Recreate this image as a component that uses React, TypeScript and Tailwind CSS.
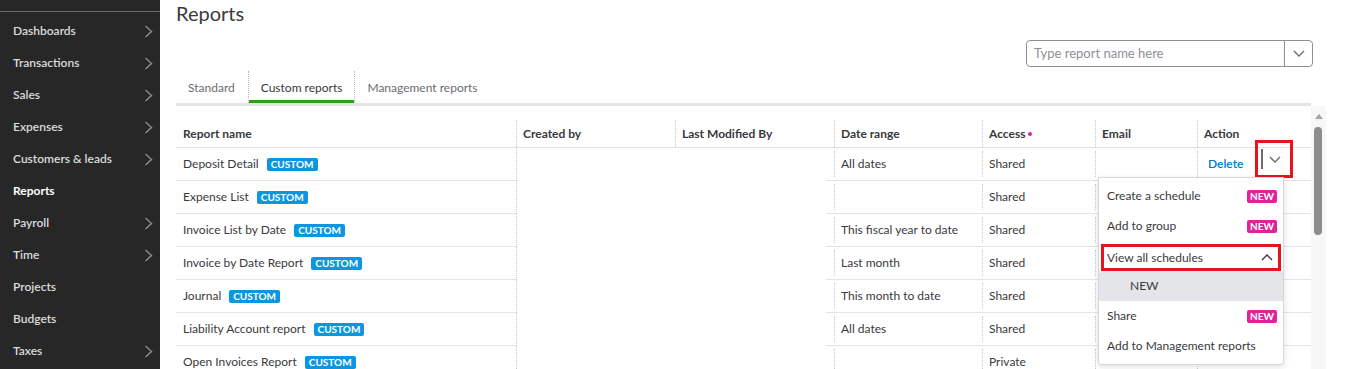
import React from 'react';

const font = { fontFamily: 'Lato, "Noto Sans", Arial, sans-serif' };

const navItems: { label: string; arrow: boolean; active?: boolean }[] = [
  { label: 'Dashboards', arrow: true },
  { label: 'Transactions', arrow: true },
  { label: 'Sales', arrow: true },
  { label: 'Expenses', arrow: true },
  { label: 'Customers & leads', arrow: true },
  { label: 'Reports', arrow: false, active: true },
  { label: 'Payroll', arrow: true },
  { label: 'Time', arrow: true },
  { label: 'Projects', arrow: false },
  { label: 'Budgets', arrow: false },
  { label: 'Taxes', arrow: true },
];

const rows = [
  { name: 'Deposit Detail', date: 'All dates', access: 'Shared' },
  { name: 'Expense List', date: '', access: 'Shared' },
  { name: 'Invoice List by Date', date: 'This fiscal year to date', access: 'Shared' },
  { name: 'Invoice by Date Report', date: 'Last month', access: 'Shared' },
  { name: 'Journal', date: 'This month to date', access: 'Shared' },
  { name: 'Liability Account report', date: 'All dates', access: 'Shared' },
  { name: 'Open Invoices Report', date: '', access: 'Private' },
];

function Chevron({ dir, className }: { dir: 'right' | 'down' | 'up'; className?: string }) {
  if (dir === 'right') {
    return (
      <svg width="9" height="13" viewBox="0 0 9 13" className={className}>
        <polyline points="1.5,1 7.5,6.5 1.5,12" fill="none" stroke="currentColor" strokeWidth="1.4" />
      </svg>
    );
  }
  const pts = dir === 'down' ? '1,1 6,6 11,1' : '1,6 6,1 11,6';
  return (
    <svg width="12" height="7" viewBox="0 0 12 7" className={className}>
      <polyline points={pts} fill="none" stroke="currentColor" strokeWidth="1.4" />
    </svg>
  );
}

function NewBadge() {
  return (
    <span className="inline-flex h-[13px] items-center rounded-[2px] bg-[#e0239b] px-[3px] text-[10px] font-bold leading-none text-white">
      NEW
    </span>
  );
}

function Sidebar() {
  return (
    <div className="w-[160px] shrink-0 bg-[#272727] pt-[11px]">
      <div className="h-px bg-[#6a6a6a]" />
      <div className="pt-[3px]">
        {navItems.map((item) => (
          <div key={item.label} className="flex h-[32px] items-center justify-between pl-[13px] pr-[7px]">
            <span
              className={
                item.active
                  ? 'text-[12px] font-bold text-white'
                  : 'text-[12px] font-semibold text-[#dcdcdc]'
              }
            >
              {item.label}
            </span>
            {item.arrow && <Chevron dir="right" className="text-[#8f8f8f]" />}
          </div>
        ))}
      </div>
    </div>
  );
}

function ActionMenu() {
  return (
    <div className="absolute left-[-99px] top-[29px] z-10 w-[186px] rounded-b-[3px] border border-[#d4d7dc] bg-white pb-[3px] pt-[3px] text-[12px] text-[#393a3d] shadow-[0_2px_6px_rgba(0,0,0,0.12)]">
      <div className="flex h-[30px] items-center justify-between pl-[8px] pr-[6px]">
        <span>Create a schedule</span>
        <NewBadge />
      </div>
      <div className="flex h-[30px] items-center justify-between pl-[8px] pr-[6px]">
        <span>Add to group</span>
        <NewBadge />
      </div>
      <div className="mx-[2px] mt-[3px] flex h-[27px] items-center justify-between border-[3px] border-[#e8141c] pl-[3px] pr-[5px]">
        <span>View all schedules</span>
        <Chevron dir="up" className="text-[#393a3d]" />
      </div>
      <div className="flex h-[30px] items-center bg-[#e4e5e8] pl-[31px]">NEW</div>
      <div className="flex h-[30px] items-center justify-between pl-[8px] pr-[6px]">
        <span>Share</span>
        <NewBadge />
      </div>
      <div className="flex h-[30px] items-center pl-[8px]">Add to Management reports</div>
    </div>
  );
}

function TableBody() {
  return (
    <div>
      {rows.map((r, i) => (
        <div key={r.name} className="flex h-[33px] text-[12px] text-[#393a3d]">
          <div className="flex w-[340px] items-center gap-[8px] border-b border-[#e3e5e8] pl-[7px]">
            <span>{r.name}</span>
            <span className="inline-flex h-[13px] items-center rounded-[2px] bg-[#0d96e0] px-[4px] text-[10px] font-bold leading-none text-white">
              CUSTOM
            </span>
          </div>
          <div className="w-[159px] border-l border-dotted border-[#c9cbcf]" />
          <div className="w-[151px]" />
          <div className="w-[156px] border-b border-[#e3e5e8] py-[3px] pl-[8px]">
            <div className="flex h-full items-center border-l border-dotted border-[#c9cbcf] pl-[6px]">{r.date}</div>
          </div>
          <div className="w-[113px] border-b border-[#e3e5e8] py-[3px]">
            <div className="flex h-full items-center border-l border-dotted border-[#c9cbcf] pl-[6px]">{r.access}</div>
          </div>
          <div className="w-[102px] border-b border-[#e3e5e8] py-[3px]">
            <div className="h-full border-l border-dotted border-[#c9cbcf]" />
          </div>
          <div className="relative flex-1 border-b border-[#e3e5e8] py-[3px]">
            <div className="flex h-full items-center border-l border-dotted border-[#c9cbcf] pl-[10px]">
              {i === 0 && <span className="font-semibold text-[#0077c5]">Delete</span>}
            </div>
            {i === 0 && (
              <>
                <div className="absolute left-[58px] top-[-8px] z-10 flex h-[38px] w-[38px] items-center border-[3px] border-[#e8141c] pl-[3px]">
                  <div className="h-[20px] w-[2px] bg-[#6b6c72]" />
                  <Chevron dir="down" className="ml-[6px] text-[#6b6c72]" />
                </div>
                <ActionMenu />
              </>
            )}
          </div>
        </div>
      ))}
    </div>
  );
}

function TableHeader() {
  const cell = 'flex h-[27px] items-center border-l border-dotted border-[#c9cbcf] pl-[6px]';
  return (
    <div className="flex border-b border-[#dfe1e4] pt-[14px] text-[12px] font-bold text-[#393a3d]">
      <div className="flex h-[27px] w-[340px] items-center pl-[7px]">Report name</div>
      <div className={`${cell} w-[159px]`}>Created by</div>
      <div className={`${cell} w-[159px]`}>Last Modified By</div>
      <div className={`${cell} w-[148px]`}>Date range</div>
      <div className={`${cell} w-[113px] gap-[3px]`}>
        Access
        <span className="h-[4px] w-[4px] rounded-full bg-[#e0239b]" />
      </div>
      <div className={`${cell} w-[102px]`}>Email</div>
      <div className={`${cell} flex-1`}>Action</div>
    </div>
  );
}

export default function App() {
  return (
    <div className="flex h-[369px] w-[1358px] overflow-hidden bg-white" style={font}>
      <Sidebar />
      <div className="flex-1 pl-[16px]">
        <div className="w-[1150px]">
          <h1 className="h-[26px] text-[20px] leading-[26px] text-[#393a3d]">Reports</h1>

          <div className="mt-[14px] flex justify-end pr-[13px]">
            <div className="flex h-[27px] w-[287px] rounded-[4px] border border-[#8d9096]">
              <div className="flex flex-1 items-center pl-[7px] text-[13px] text-[#8d9096]">Type report name here</div>
              <div className="flex w-[28px] items-center justify-center border-l border-[#8d9096] text-[#6b6c72]">
                <Chevron dir="down" />
              </div>
            </div>
          </div>

          <div className="mt-[4px] flex w-[1135px] border-b-[3px] border-[#e3e5e8] text-[12px]">
            <div className="flex h-[32px] items-center pl-[12px] pr-[13px] pt-[1px] text-[#6b6c72]">Standard</div>
            <div className="flex h-[32px] items-center border-x border-dotted border-[#b8babe] px-[12px] pt-[1px] text-[#393a3d] shadow-[inset_0_-3px_0_#2ca01c]">
              Custom reports
            </div>
            <div className="flex h-[32px] items-center px-[12px] pt-[1px] text-[#6b6c72]">Management reports</div>
          </div>

          <div className="flex">
            <div className="w-[1135px]">
              <TableHeader />
              <TableBody />
            </div>
            <div className="relative h-[280px] w-[15px] bg-[#f7f7f7]">
              <div className="absolute left-[4px] top-[8px] h-0 w-0 border-x-[4px] border-b-[5px] border-x-transparent border-b-[#a3a3a3]" />
              <div className="absolute left-[3px] top-[21px] h-[108px] w-[8px] rounded-full bg-[#8c8c8c]" />
            </div>
          </div>
        </div>
      </div>
    </div>
  );
}
